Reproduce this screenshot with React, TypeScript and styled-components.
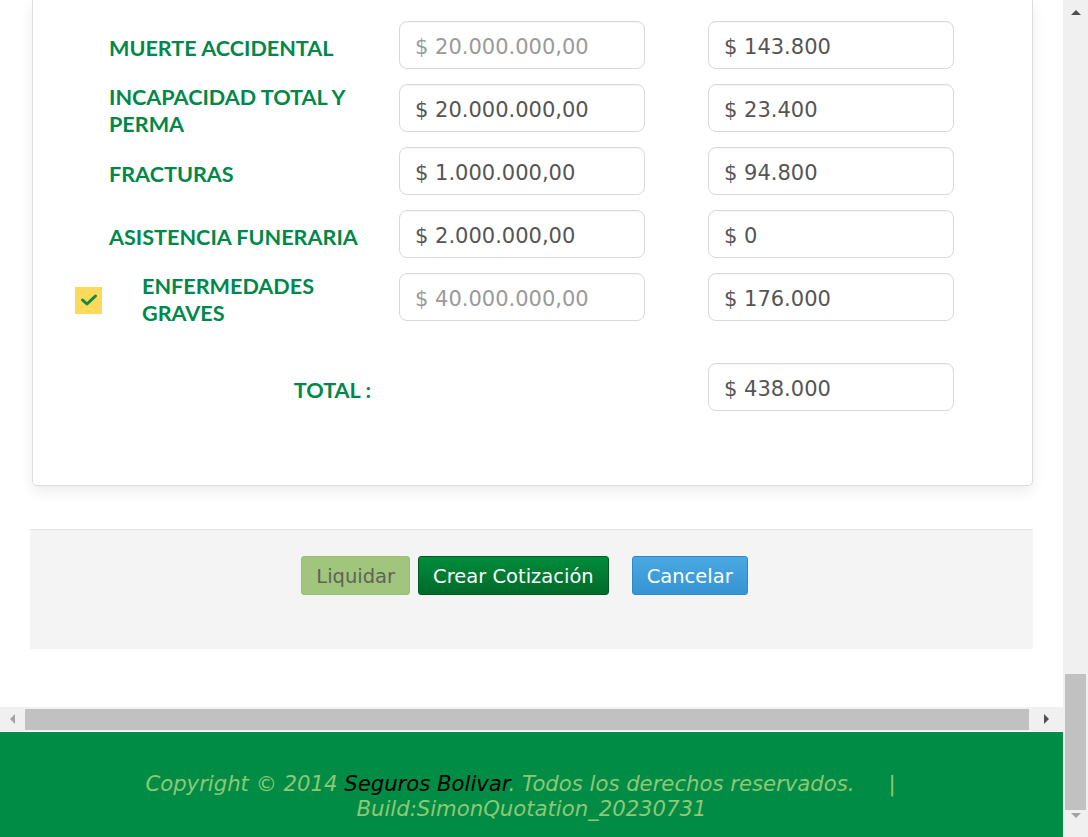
import React from "react";
import styled, { createGlobalStyle } from "styled-components";

const GlobalStyle = createGlobalStyle`
  html, body { margin: 0; padding: 0; overflow: hidden; background: #fff; }
  body { font-family: "DejaVu Sans", Verdana, sans-serif; }
  * { box-sizing: border-box; }
`;

const Viewport = styled.div`
  display: grid;
  grid-template-columns: 1063px 25px;
  width: 1088px;
  height: 837px;
  overflow: hidden;
`;

const Main = styled.div`
  display: flex;
  flex-direction: column;
  height: 837px;
  overflow: hidden;
`;

const Content = styled.div`
  height: 707px;
  flex: none;
  padding: 0 30px 0 30px;
  background: #fff;
`;

const Card = styled.section`
  margin-left: 2px;
  width: 1001px;
  background: #fff;
  border: 1px solid #dcdcdc;
  border-top: none;
  border-radius: 0 0 5px 5px;
  box-shadow: 0 6px 14px rgba(0, 0, 0, 0.07);
  padding: 21px 0 74px 43px;
`;

const Grid = styled.div`
  display: grid;
  grid-template-columns: 323px 309px 246px;
  grid-template-rows: repeat(5, 48px) 12px 48px;
  row-gap: 15px;
  align-items: center;
`;

const LabelCell = styled.div<{ $indent?: number; $align?: "start" | "end" }>`
  height: 48px;
  display: flex;
  align-items: center;
  gap: 40px;
  padding-top: 6px;
  padding-left: ${(p) => p.$indent ?? 0}px;
  padding-right: ${(p) => (p.$align === "end" ? 28 : 10)}px;
  justify-content: ${(p) => (p.$align === "end" ? "flex-end" : "flex-start")};
`;

const Label = styled.span`
  font-family: Lato, "Open Sans", sans-serif;
  font-weight: 700;
  font-size: 21.6px;
  line-height: 27px;
  color: #00884a;
`;

const Check = styled.span`
  flex: none;
  width: 27px;
  height: 27px;
  margin-left: -1px;
  background: #fdd95c;
  display: flex;
  align-items: center;
  justify-content: center;
`;

const Amount = styled.input`
  width: 246px;
  height: 48px;
  border: 1px solid #d9d9d9;
  border-radius: 8px;
  background: #fff;
  padding: 3px 15px 0;
  font-family: "DejaVu Sans", Verdana, sans-serif;
  font-size: 21px;
  color: #555;
  outline: none;
  box-shadow: inset 0 1px 1px rgba(0, 0, 0, 0.03);
  &::placeholder { color: #9a9a9a; }
`;

const Spacer = styled.div`
  grid-column: 1 / -1;
`;

const ActionPanel = styled.div`
  margin-top: 43px;
  width: 1003px;
  height: 120px;
  background: #f4f4f4;
  border-top: 1px solid #e2e2e2;
  display: flex;
  justify-content: center;
  align-items: flex-start;
  padding: 26px 14px 0 0;
`;

const Btn = styled.button<{ $kind: "light" | "primary" | "info"; $gap?: number }>`
  height: 39px;
  padding: 1px 14px 0;
  margin-right: ${(p) => p.$gap ?? 0}px;
  border-radius: 3px;
  font-family: "DejaVu Sans", Verdana, sans-serif;
  font-size: 19.5px;
  cursor: pointer;
  ${(p) =>
    p.$kind === "light"
      ? `background: #a1c57c; border: 1px solid #98be72; color: #5c6458;`
      : p.$kind === "primary"
      ? `background: linear-gradient(#008c3c, #006a2a); border: 1px solid #005b23; color: #fff;`
      : `background: linear-gradient(#4aa9e2, #3594d2); border: 1px solid #2f89c6; color: #fff;`}
`;

const HScroll = styled.div`
  height: 25px;
  flex: none;
  background: #f0f0f0;
  display: grid;
  grid-template-columns: 25px 1fr 34px;
  align-items: center;
  border-bottom: 1px solid #fff;
`;

const HThumb = styled.div`
  height: 21px;
  background: #c1c1c1;
`;

const Arrow = styled.span<{ $dir: "left" | "right" | "up" | "down"; $dim?: boolean }>`
  justify-self: center;
  align-self: center;
  width: 0;
  height: 0;
  border-style: solid;
  ${(p) => {
    const c = p.$dim ? "#a3a3a3" : "#505050";
    switch (p.$dir) {
      case "left":
        return `border-width: 5px 5px 5px 0; border-color: transparent ${c} transparent transparent;`;
      case "right":
        return `border-width: 5px 0 5px 5px; border-color: transparent transparent transparent ${c};`;
      case "up":
        return `border-width: 0 5px 5px 5px; border-color: transparent transparent ${c} transparent;`;
      default:
        return `border-width: 5px 5px 0 5px; border-color: ${c} transparent transparent transparent;`;
    }
  }}
`;

const Footer = styled.footer`
  flex: 1;
  background: #008c45;
  display: flex;
  flex-direction: column;
  align-items: center;
  padding-top: 39px;
  font-family: "DejaVu Sans", Verdana, sans-serif;
  font-style: italic;
  font-size: 21.2px;
  line-height: 25px;
  color: #8fc775;
  white-space: nowrap;
`;

const FooterLine = styled.div<{ $shift?: number }>`
  padding-right: ${(p) => p.$shift ?? 0}px;
`;

const Brand = styled.span`
  color: #000;
`;

const Pipe = styled.span`
  margin-left: 34px;
`;

const VScroll = styled.div`
  background: #f0f0f0;
  display: flex;
  flex-direction: column;
  align-items: center;
  height: 837px;
  padding-top: 10px;
`;

const VThumb = styled.div`
  width: 21px;
  height: 137px;
  margin-top: 659px;
  background: #c1c1c1;
`;

const VBottom = styled.div`
  margin-top: 8px;
`;

type Row = {
  label: string;
  insured: string;
  placeholder?: boolean;
  premium: string;
  check?: boolean;
};

const rows: Row[] = [
  { label: "MUERTE ACCIDENTAL", insured: "$ 20.000.000,00", placeholder: true, premium: "$ 143.800" },
  { label: "INCAPACIDAD TOTAL Y PERMA", insured: "$ 20.000.000,00", premium: "$ 23.400" },
  { label: "FRACTURAS", insured: "$ 1.000.000,00", premium: "$ 94.800" },
  { label: "ASISTENCIA FUNERARIA", insured: "$ 2.000.000,00", premium: "$ 0" },
  { label: "ENFERMEDADES GRAVES", insured: "$ 40.000.000,00", placeholder: true, premium: "$ 176.000", check: true },
];

const CheckIcon = () => (
  <svg width="18" height="14" viewBox="0 0 18 14" fill="none">
    <path d="M2.5 7 L7 11 L15.5 3" stroke="#0d8a3e" strokeWidth="3" strokeLinecap="round" strokeLinejoin="round" />
  </svg>
);

export default function App() {
  return (
    <>
      <GlobalStyle />
      <Viewport>
        <Main>
          <Content>
            <Card>
              <Grid>
                {rows.map((r) => (
                  <React.Fragment key={r.label}>
                    <LabelCell $indent={r.check ? 0 : 33}>
                      {r.check && (
                        <Check>
                          <CheckIcon />
                        </Check>
                      )}
                      <Label>{r.label}</Label>
                    </LabelCell>
                    {r.placeholder ? (
                      <Amount readOnly placeholder={r.insured} />
                    ) : (
                      <Amount readOnly value={r.insured} />
                    )}
                    <Amount readOnly value={r.premium} />
                  </React.Fragment>
                ))}
                <Spacer />
                <LabelCell $align="end">
                  <Label>TOTAL :</Label>
                </LabelCell>
                <div />
                <Amount readOnly value="$ 438.000" />
              </Grid>
            </Card>
            <ActionPanel>
              <Btn $kind="light" $gap={8}>Liquidar</Btn>
              <Btn $kind="primary" $gap={23}>Crear Cotización</Btn>
              <Btn $kind="info">Cancelar</Btn>
            </ActionPanel>
          </Content>
          <HScroll>
            <Arrow $dir="left" $dim />
            <HThumb />
            <Arrow $dir="right" />
          </HScroll>
          <Footer>
            <FooterLine $shift={22}>
              Copyright © 2014 <Brand>Seguros Bolivar</Brand>. Todos los derechos reservados.
              <Pipe>|</Pipe>
            </FooterLine>
            <FooterLine>Build:SimonQuotation_20230731</FooterLine>
          </Footer>
        </Main>
        <VScroll>
          <Arrow $dir="up" />
          <VThumb />
          <VBottom>
            <Arrow $dir="down" $dim />
          </VBottom>
        </VScroll>
      </Viewport>
    </>
  );
}
